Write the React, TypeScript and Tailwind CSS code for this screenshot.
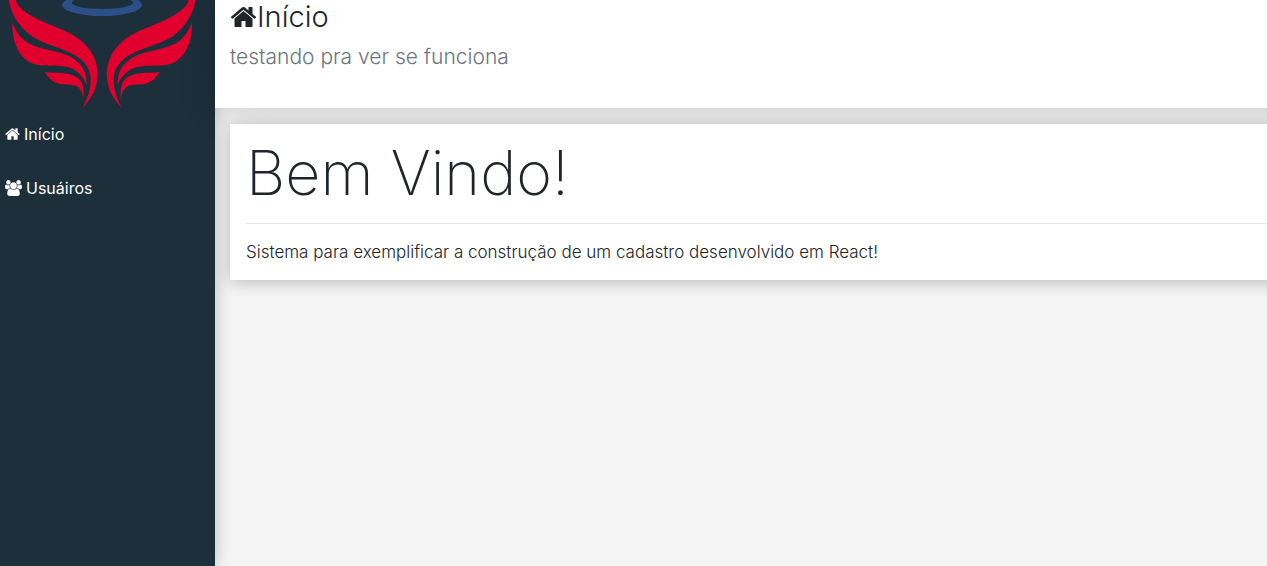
function HomeIcon({ className }: { className: string }) {
  return (
    <svg viewBox="64 0 1664 1792" fill="currentColor" className={className} aria-hidden="true">
      <path d="M1472 992v480q0 26-19 45t-45 19h-384v-384h-256v384h-384q-26 0-45-19t-19-45v-480q0-1 .5-3t.5-3l575-474 575 474q1 2 1 6zm223-69l-62 74q-8 9-21 11h-3q-13 0-21-7l-692-577-692 577q-12 8-24 7-13-2-21-11l-62-74q-8-10-7-23.5t11-21.5l719-599q32-26 76-26t76 26l244 204v-195q0-14 9-23t23-9h192q14 0 23 9t9 23v408l219 182q10 8 11 21.5t-7 23.5z" />
    </svg>
  );
}

function UsersIcon({ className }: { className: string }) {
  return (
    <svg viewBox="0 0 1920 1792" fill="currentColor" className={className} aria-hidden="true">
      <path d="M593 896q-162 5-265 128h-134q-82 0-138-40.5t-56-118.5q0-353 124-353 6 0 43.5 21t97.5 42.5 119 21.5q67 0 133-23-5 37-5 66 0 139 81 256zm1071 637q0 120-73 189.5t-194 69.5h-874q-121 0-194-69.5t-73-189.5q0-53 3.5-103.5t14-109 26.5-108.5 43-97.5 62-81 85.5-53.5 111.5-20q10 0 43 21.5t73 48 107 48 135 21.5 135-21.5 107-48 73-48 43-21.5q61 0 111.5 20t85.5 53.5 62 81 43 97.5 26.5 108.5 14 109 3.5 103.5zm-1024-1277q0 106-75 181t-181 75-181-75-75-181 75-181 181-75 181 75 75 181zm704 384q0 159-112.5 271.5t-271.5 112.5-271.5-112.5-112.5-271.5 112.5-271.5 271.5-112.5 271.5 112.5 112.5 271.5zm576 225q0 78-56 118.5t-138 40.5h-134q-103-123-265-128 81-117 81-256 0-29-5-66 66 23 133 23 59 0 119-21.5t97.5-42.5 43.5-21q124 0 124 353zm-128-609q0 106-75 181t-181 75-181-75-75-181 75-181 181-75 181 75 75 181z" />
    </svg>
  );
}

function Wing() {
  return (
    <g fill="#e1002d">
      <path d="M26 -6C30 28 42 62 82 98C126 137 205 143 246 181C281 214 280 263 248 323C280 289 293 258 293 219C291 182 276 150 242 121C186 77 102 68 56 18C50 11 48 4 46 -6Z" />
      <path d="M37 68C35 122 56 172 96 190C128 202 163 193 202 201C232 209 251 230 260 256C262 222 249 190 211 170C166 148 126 152 83 128C58 112 47 91 37 68Z" />
      <path d="M134 216C147 235 158 247 179 252C200 256 222 250 236 263C246 273 249 284 249 301C254 270 251 246 230 231C204 216 168 220 134 216Z" />
    </g>
  );
}

function Logo() {
  return (
    <a href="#inicio" aria-label="Início" className="block h-[108px]">
      <svg viewBox="0 0 645 324" className="block w-full" aria-hidden="true">
        <path
          fill="#2d4f88"
          fillRule="evenodd"
          d="M186 15a120 33 0 1 0 240 0a120 33 0 1 0 -240 0ZM215 8a92 19 0 1 0 184 0a92 19 0 1 0 -184 0Z"
        />
        <Wing />
        <g transform="translate(613 0) scale(-1 1)">
          <Wing />
        </g>
      </svg>
    </a>
  );
}

export default function App() {
  return (
    <div className="grid min-h-screen grid-cols-[215px_minmax(0,1fr)] grid-rows-[108px_1fr] overflow-hidden bg-[#f5f5f5] font-['Inter','Liberation_Sans',sans-serif] font-light text-[#212529]">
      <aside className="row-span-2 bg-[#1c2f3a] shadow-[0_0_16px_rgba(0,0,0,0.25)]">
        <Logo />
        <nav className="flex flex-col gap-0.5 text-base font-normal text-white">
          <a href="#inicio" className="flex h-[52px] items-center gap-1 px-[5px]">
            <HomeIcon className="h-4 w-[15px]" />
            Início
          </a>
          <a href="#usuarios" className="flex h-[52px] items-center gap-1 px-[5px]">
            <UsersIcon className="h-4 w-[17px]" />
            Usuáiros
          </a>
        </nav>
      </aside>

      <header className="-mr-12 flex flex-col bg-white px-[15px] shadow-[0_2px_23px_rgba(0,0,0,0.12),0_2px_49px_rgba(0,0,0,0.07)]">
        <h1 className="flex items-center text-[29px] leading-[34px]">
          <HomeIcon className="h-7 w-[27px]" />
          Início
        </h1>
        <p className="mt-1.5 text-[21px] leading-[34px] text-[#6c757d]">testando pra ver se funciona</p>
      </header>

      <main className="py-4 pl-[15px]">
        <section className="-mr-12 bg-white p-4 shadow-[0_2px_16px_rgba(0,0,0,0.25)]">
          <h2 className="text-[61px] leading-[67px] font-extralight">Bem Vindo!</h2>
          <hr className="my-4 border-[#e5e5e5]" />
          <p className="text-[17px] leading-6">
            Sistema para exemplificar a construção de um cadastro desenvolvido em React!
          </p>
        </section>
      </main>
    </div>
  );
}
